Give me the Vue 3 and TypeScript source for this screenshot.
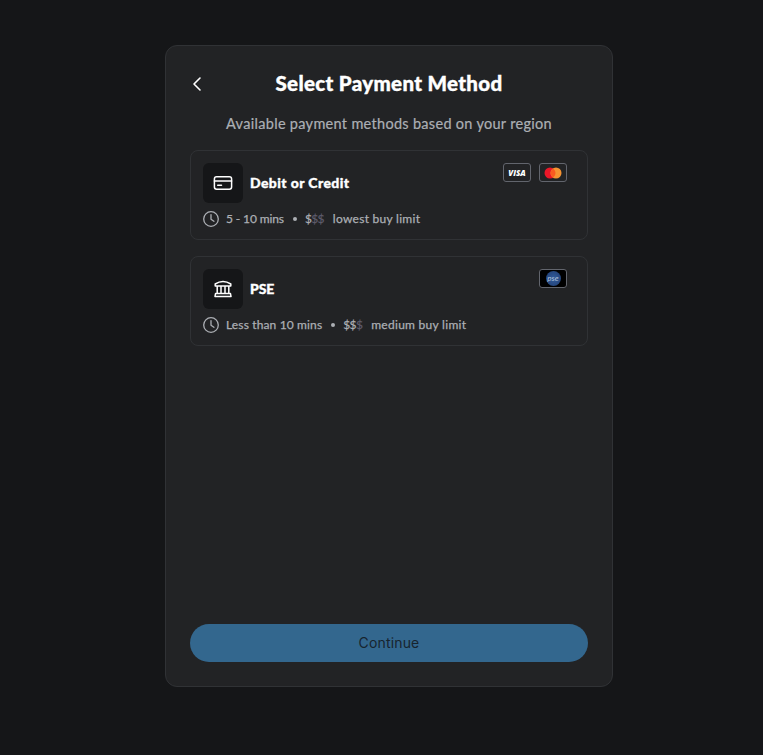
<script setup lang="ts">
interface PaymentMethod {
  id: string
  name: string
  icon: 'card' | 'bank'
  time: string
  cost: number
  limit: string
  brands: string[]
}

const methods: PaymentMethod[] = [
  { id: 'debit', name: 'Debit or Credit', icon: 'card', time: '5 - 10 mins', cost: 1, limit: 'lowest buy limit', brands: ['visa', 'mastercard'] },
  { id: 'bank-transfer', name: 'PSE', icon: 'bank', time: 'Less than 10 mins', cost: 2, limit: 'medium buy limit', brands: ['pse'] },
]
</script>

<template>
  <main class="page">
    <section class="panel">
      <header class="header">
        <button class="back" aria-label="Back">
          <svg width="10" height="16" viewBox="0 0 10 16"><path d="M8 2 2 8l6 6" /></svg>
        </button>
        <h1 class="title">Select Payment Method</h1>
      </header>
      <p class="subtitle">Available payment methods based on your region</p>

      <div class="methods">
        <article v-for="m in methods" :key="m.id" class="method" :class="m.id">
          <div class="top">
            <div class="tile">
              <svg v-if="m.icon === 'card'" width="20" height="20" viewBox="0 0 20 20">
                <rect x="1.4" y="3.8" width="17.2" height="12.4" rx="2.2" />
                <path d="M1.4 8h17.2M4.7 12.2h3.8" />
              </svg>
              <svg v-else width="20" height="20" viewBox="0 0 20 20">
                <path d="M2.2 5Q10 .2 17.8 5v2H2.2zM4.2 7v7.4M8 7v7.4M12 7v7.4M15.8 7v7.4M2.6 14.4h14.8l.6 3H2z" />
              </svg>
            </div>
            <h2 class="name">{{ m.name }}</h2>
            <div class="brands">
              <span v-for="b in m.brands" :key="b" class="brand" :class="b">
                <span v-if="b === 'visa'" class="visa-text">VISA</span>
                <svg v-else-if="b === 'mastercard'" width="18" height="12" viewBox="0 0 18 12">
                  <circle cx="6" cy="6" r="5.5" fill="#eb1728" />
                  <circle cx="12" cy="6" r="5.5" fill="#f79431" />
                  <path d="M9 1.4a5.5 5.5 0 0 1 0 9.2 5.5 5.5 0 0 1 0-9.2z" fill="#fb5b20" />
                </svg>
                <span v-else class="pse-ball">pse</span>
              </span>
            </div>
          </div>
          <div class="details">
            <svg class="clock" width="16" height="16" viewBox="0 0 16 16">
              <circle cx="8" cy="8" r="7.3" /><path d="M8 3.6v4.6l2.9 2.1" />
            </svg>
            <span class="time">{{ m.time }}</span>
            <span class="dot"></span>
            <span class="cost"><span v-for="n in 3" :key="n" :class="{ dim: n > m.cost }">$</span></span>
            <span class="limit">{{ m.limit }}</span>
          </div>
        </article>
      </div>
      <button class="continue">Continue</button>
    </section>
  </main>
</template>

<style>
body {
  background: #151618;
}
</style>

<style scoped>
.page {
  box-sizing: border-box;
  height: 755px;
  padding: 45px 150px 68px 165px;
  background: #151618;
  font-family: Lato, "Liberation Sans", sans-serif;
}
.panel {
  box-sizing: border-box;
  display: flex;
  flex-direction: column;
  width: 448px;
  height: 642px;
  padding: 24px;
  border: 1px solid #303235;
  border-radius: 12px;
  background: #222325;
}
.header {
  display: grid;
  grid-template-columns: 14px 1fr 14px;
  align-items: center;
  height: 28px;
}
.back {
  display: flex;
  padding: 0 0 0 2px;
  border: 0;
  background: none;
}
.back svg {
  fill: none;
  stroke: #fff;
  stroke-width: 1.6;
  stroke-linecap: round;
  stroke-linejoin: round;
}
.title {
  margin: 0;
  color: #fff;
  font-size: 20.5px;
  font-weight: 900;
  line-height: 26px;
  letter-spacing: 0.34px;
  text-align: center;
  white-space: nowrap;
  padding-bottom: 2px;
  -webkit-text-stroke: 0.4px #fff;
}
.subtitle {
  margin: 15px 0 16px;
  color: #acafb4;
  font-size: 14.5px;
  font-weight: 400;
  line-height: 21px;
  letter-spacing: 0.3px;
  text-align: center;
  white-space: nowrap;
  -webkit-text-stroke: 0.2px #acafb4;
}
.methods {
  display: flex;
  flex-direction: column;
  gap: 16px;
}
.method {
  box-sizing: border-box;
  height: 90px;
  padding: 12px;
  border: 1px solid #303235;
  border-radius: 8px;
}
.top {
  display: flex;
  height: 40px;
}
.tile {
  display: flex;
  align-items: center;
  justify-content: center;
  width: 40px;
  height: 40px;
  border-radius: 6px;
  background: #151618;
}
.tile svg {
  fill: none;
  stroke: #fff;
  stroke-width: 1.5;
  stroke-linecap: round;
  stroke-linejoin: round;
}
.name {
  margin: 0 auto 0 7px;
  color: #fff;
  font-size: 14px;
  font-weight: 900;
  line-height: 40px;
  letter-spacing: 0.4px;
  -webkit-text-stroke: 0.35px #fff;
}
.bank-transfer .name {
  letter-spacing: -0.1px;
}
.brands {
  display: flex;
  gap: 8px;
  margin-right: 8px;
}
.brand {
  box-sizing: border-box;
  display: flex;
  align-items: center;
  justify-content: center;
  width: 28px;
  height: 19px;
  border: 1px solid #62656d;
  border-radius: 3px;
}
.visa-text {
  color: #fff;
  font: italic 800 8px/10px "Open Sans", sans-serif;
  letter-spacing: 0;
}
.brand.pse {
  background: #000;
}
.pse-ball {
  width: 15px;
  height: 15px;
  border-radius: 50%;
  background: radial-gradient(circle, #315c9d, #203d70);
  color: #b2c4d9;
  font: italic 8px/14px Lato, sans-serif;
  text-align: center;
}
.details {
  display: flex;
  align-items: center;
  height: 16px;
  margin-top: 8px;
  color: #acafb4;
  font-size: 12px;
  line-height: 16px;
  white-space: nowrap;
  -webkit-text-stroke: 0.25px;
}
.clock {
  margin-right: 7px;
  fill: none;
  stroke: #acafb4;
  stroke-width: 1.3;
  stroke-linecap: round;
  stroke-linejoin: round;
}
.time {
  letter-spacing: -0.12px;
}
.bank-transfer .time {
  letter-spacing: 0.14px;
}
.dot {
  width: 4px;
  height: 4px;
  margin: 0 8px 0 9px;
  border-radius: 50%;
  background: #acafb4;
}
.cost {
  margin-right: 9px;
  letter-spacing: -0.65px;
}
.dim {
  color: #5d5b6b;
}
.limit {
  letter-spacing: 0.28px;
}
.continue {
  height: 38px;
  margin-top: auto;
  padding: 0;
  border: 0;
  border-radius: 19px;
  background: #33678e;
  color: #17242e;
  font: 400 14px/38px Inter, sans-serif;
  letter-spacing: 0.15px;
}
</style>
